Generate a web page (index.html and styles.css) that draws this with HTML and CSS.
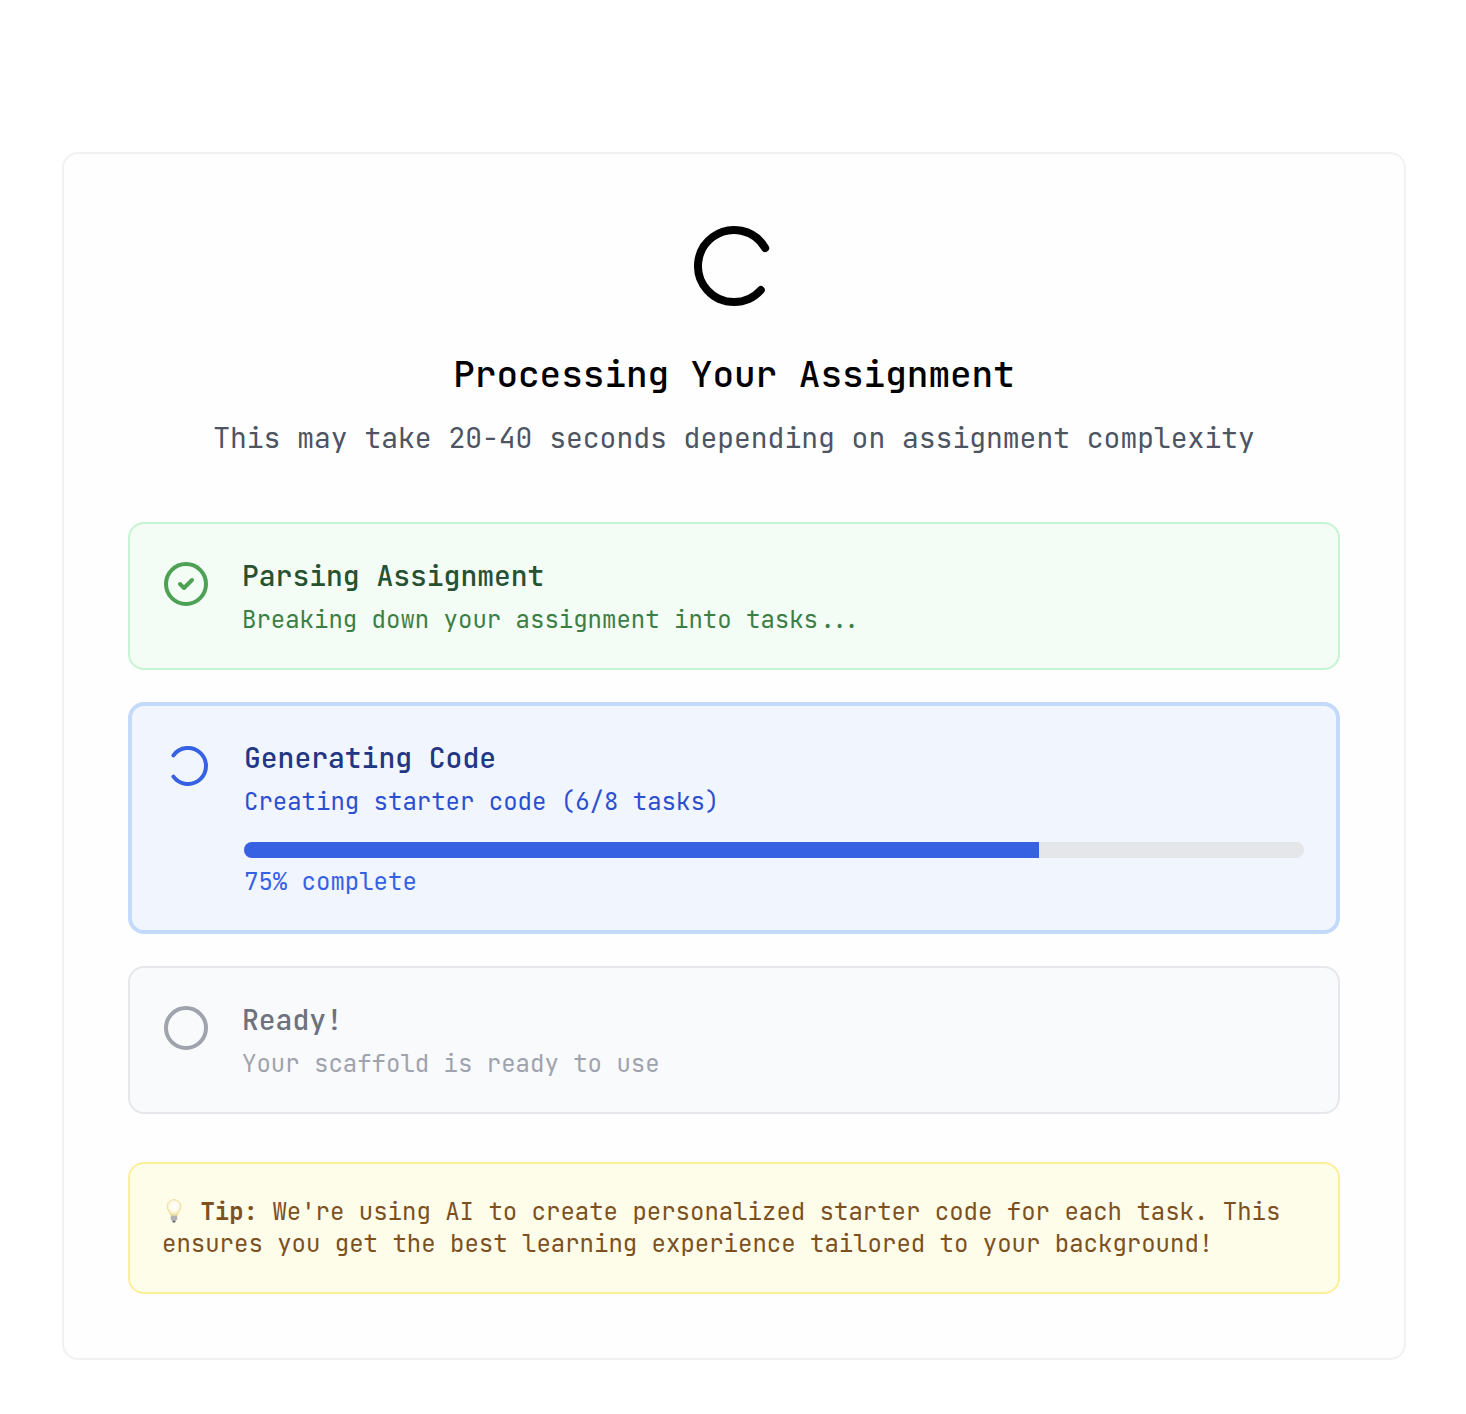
FILE: index.html
```html
<!DOCTYPE html>
<html lang="en">
  <head>
    <meta charset="UTF-8" />
    <meta name="viewport" content="width=device-width, initial-scale=1.0" />
    <title>Processing Your Assignment</title>
    <link rel="stylesheet" href="styles.css">
  </head>
  <body>
    <main class="card">
      <header class="card-header">
        <svg class="spinner" viewBox="0 0 24 24" aria-hidden="true">
          <path d="M21 12a9 9 0 1 1-6.219-8.56" transform="rotate(42 12 12)" />
        </svg>
        <h2>Processing Your Assignment</h2>
        <p>This may take 20-40 seconds depending on assignment complexity</p>
      </header>

      <div class="steps">
        <section class="step done">
          <svg class="step-icon" viewBox="0 0 24 24" aria-hidden="true">
            <circle cx="12" cy="12" r="10" />
            <path d="m9 12 2 2 4-4" />
          </svg>
          <div class="step-body">
            <h3>Parsing Assignment</h3>
            <p>Breaking down your assignment into tasks...</p>
          </div>
        </section>

        <section class="step active">
          <svg class="step-icon" viewBox="0 0 24 24" aria-hidden="true">
            <path d="M21 12a9 9 0 1 1-6.219-8.56" transform="rotate(216 12 12)" />
          </svg>
          <div class="step-body">
            <h3>Generating Code</h3>
            <p>Creating starter code (6/8 tasks)</p>
            <div class="progress" role="progressbar" aria-label="Generating code" aria-valuenow="75" aria-valuemin="0" aria-valuemax="100">
              <div class="progress-fill" style="width: 75%"></div>
            </div>
            <p class="progress-label">75% complete</p>
          </div>
        </section>

        <section class="step pending">
          <svg class="step-icon" viewBox="0 0 24 24" aria-hidden="true">
            <circle cx="12" cy="12" r="10" />
          </svg>
          <div class="step-body">
            <h3>Ready!</h3>
            <p>Your scaffold is ready to use</p>
          </div>
        </section>
      </div>

      <p class="tip">
        <svg class="bulb" viewBox="0 0 24 28" role="img" aria-label="Light bulb">
          <defs>
            <radialGradient id="glass" cx="50%" cy="42%" r="58%">
              <stop offset="0" stop-color="#ffffff" />
              <stop offset="0.6" stop-color="#fdf9ea" />
              <stop offset="1" stop-color="#f0dc8c" />
            </radialGradient>
          </defs>
          <path d="M12 .7c-4 0-6.800 2.900-6.800 6.700 0 4 2.600 5.300 3.600 9h6.400c1-3.700 3.600-5 3.600-9C18.800 3.600 16 .7 12 .7z" fill="url(#glass)" stroke="#ead68c" stroke-width=".7" />
          <path d="M9 16.400h6v4.200l-1.500 1.800h-3L9 20.600z" fill="#c2c2c2" />
          <path d="M9 18h6M9 20h6" stroke="#969696" stroke-width=".7" />
          <path d="M10.200 21.800h3.600l-1 1.600h-1.600z" fill="#555" />
        </svg>
        <strong>Tip:</strong> We're using AI to create personalized starter code for each task. This ensures you get the best learning experience tailored to your background!
      </p>
    </main>
  </body>
</html>
```

FILE: styles.css
```css
* {
  box-sizing: border-box;
}
body {
  font-family: "JetBrains Mono", "DejaVu Sans Mono", monospace;
  background-color: #fff;
  margin: 0;
  padding: 152px 60px 54px 62px;
}
h2,
h3,
p {
  margin: 0;
}
svg {
  fill: none;
  stroke: currentColor;
  stroke-width: 2;
  stroke-linecap: round;
  stroke-linejoin: round;
}
.card {
  max-width: 1344px;
  margin: 0 auto;
  padding: 64px;
  background-color: #fefefe;
  border: 2px solid #f1f1f1;
  border-radius: 16px;
}
.card-header {
  text-align: center;
  margin-bottom: 64px;
}
.spinner {
  display: block;
  width: 96px;
  height: 96px;
  margin: 0 auto 32px;
  color: #000;
}
.card-header h2 {
  font-size: 36px;
  font-weight: 500;
  line-height: 56px;
  margin-bottom: 16px;
  color: #000;
}
.card-header p {
  font-size: 28px;
  line-height: 40px;
  color: #4d5462;
}
.steps {
  display: flex;
  flex-direction: column;
  gap: 32px;
}
.step {
  display: flex;
  align-items: flex-start;
  gap: 32px;
  padding: 32px;
  border: 2px solid;
  border-radius: 16px;
}
.step-icon {
  flex-shrink: 0;
  width: 48px;
  height: 48px;
  margin-top: 4px;
}
.step-body {
  flex: 1;
  min-width: 0;
}
.step h3 {
  font-size: 28px;
  font-weight: 500;
  line-height: 40px;
  margin-bottom: 8px;
}
.step p {
  font-size: 24px;
  line-height: 32px;
}
.done {
  background-color: #f3fcf5;
  border-color: #c5f4d2;
}
.done .step-icon {
  color: #4ca154;
}
.done h3 {
  color: #265132;
}
.done p {
  color: #3c7f46;
}
.active {
  background-color: #f0f5fe;
  border: 4px solid #c4dafa;
}
.active h3 {
  color: #233683;
}
.active p {
  color: #2c4fcf;
}
.active .step-icon,
.active .progress-label {
  color: #3761e3;
}
.pending {
  background-color: #f9fafc;
  border-color: #e5e7ea;
}
.pending .step-icon,
.pending p {
  color: #9fa3ae;
}
.pending h3 {
  color: #6c727e;
}
.progress {
  height: 16px;
  margin: 24px 0 8px;
  background-color: #e5e6ea;
  border-radius: 8px;
  overflow: hidden;
}
.progress-fill {
  height: 100%;
  background-color: #3761e3;
}
.tip {
  margin-top: 48px;
  padding: 32px;
  font-size: 24px;
  line-height: 32px;
  color: #7d5022;
  background-color: #fefdea;
  border: 2px solid #fbef98;
  border-radius: 16px;
}
.bulb {
  width: 24px;
  height: 28px;
  vertical-align: text-bottom;
  stroke: none;
}
```
